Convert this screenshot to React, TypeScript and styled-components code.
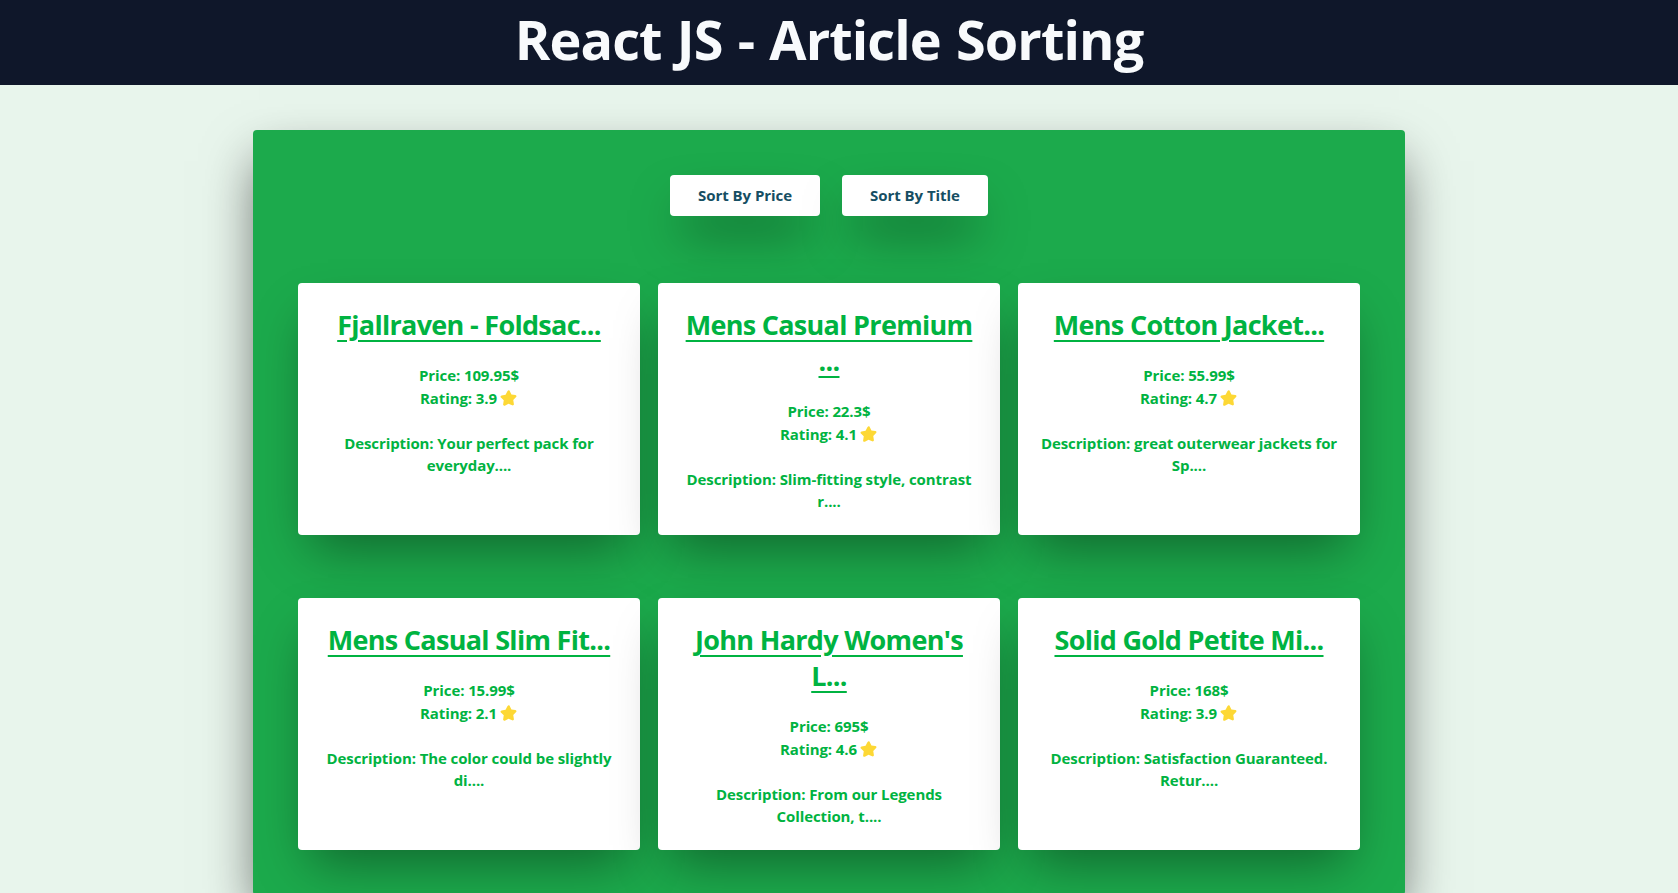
import React from "react";
import styled, { createGlobalStyle } from "styled-components";

type Article = {
  title: string;
  price: string;
  rating: string;
  description: string;
};

const articles: Article[] = [
  {
    title: "Fjallraven - Foldsac...",
    price: "109.95",
    rating: "3.9",
    description: "Your perfect pack for everyday....",
  },
  {
    title: "Mens Casual Premium ...",
    price: "22.3",
    rating: "4.1",
    description: "Slim-fitting style, contrast r....",
  },
  {
    title: "Mens Cotton Jacket...",
    price: "55.99",
    rating: "4.7",
    description: "great outerwear jackets for Sp....",
  },
  {
    title: "Mens Casual Slim Fit...",
    price: "15.99",
    rating: "2.1",
    description: "The color could be slightly di....",
  },
  {
    title: "John Hardy Women's L...",
    price: "695",
    rating: "4.6",
    description: "From our Legends Collection, t....",
  },
  {
    title: "Solid Gold Petite Mi...",
    price: "168",
    rating: "3.9",
    description: "Satisfaction Guaranteed. Retur....",
  },
];

const GlobalStyle = createGlobalStyle`
  html, body {
    margin: 0;
    padding: 0;
    height: 893px;
    overflow: hidden;
    background: #e8f5ec;
    font-family: "Open Sans", "Noto Sans", sans-serif;
  }
`;

const Page = styled.div`
  width: 1658px;
`;

const Header = styled.header`
  height: 85px;
  width: 1678px;
  background: #0f172a;
  color: #f8fafc;
  display: flex;
  justify-content: center;
  padding-right: 20px;
  box-sizing: border-box;
`;

const Heading = styled.h1`
  margin: 0;
  font-size: 54px;
  line-height: 78px;
  font-weight: 700;
  letter-spacing: -0.9px;
  word-spacing: 2px;
`;

const Panel = styled.main`
  width: 1152px;
  box-sizing: border-box;
  margin: 45px auto 0;
  padding: 45px;
  background: #1caa4c;
  border-radius: 4px;
  box-shadow: 0 25px 50px -6px rgba(0, 0, 0, 0.6);
`;

const Toolbar = styled.div`
  display: flex;
  justify-content: center;
  gap: 22px;
  margin-bottom: 67px;
`;

const SortButton = styled.button`
  height: 41px;
  padding: 0 28px 2px;
  border: 0;
  border-radius: 4px;
  background: #fff;
  color: #164e63;
  font-family: inherit;
  font-size: 15px;
  font-weight: 700;
  letter-spacing: -0.05px;
  box-shadow: 0 25px 50px -12px rgba(0, 0, 0, 0.6);
`;

const Grid = styled.div`
  display: grid;
  grid-template-columns: repeat(3, 342px);
  justify-content: space-between;
  row-gap: 63px;
`;

const Card = styled.article`
  height: 252px;
  box-sizing: border-box;
  padding: 24px 20px 0;
  background: #fff;
  border-radius: 4px;
  text-align: center;
  color: #00b341;
  font-size: 15px;
  line-height: 22.5px;
  font-weight: 700;
  letter-spacing: -0.1px;
  box-shadow: 0 25px 50px -12px rgba(0, 0, 0, 0.4);
`;

const Title = styled.h2`
  margin: 0 0 21px;
  font-size: 27px;
  line-height: 36px;
  font-weight: 700;
  letter-spacing: -0.7px;
  text-decoration: underline;
  text-underline-offset: 5px;
`;

const Line = styled.p`
  margin: 0;
`;

const Description = styled.p`
  margin: 23px 0 0;
  line-height: 22px;
`;

const Star = styled.svg`
  width: 19px;
  height: 19px;
  margin-left: 2px;
  vertical-align: -3px;
  fill: #fdd835;
`;

const App: React.FC = () => {
  return (
    <Page>
      <GlobalStyle />
      <Header>
        <Heading>React JS - Article Sorting</Heading>
      </Header>
      <Panel>
        <Toolbar>
          <SortButton>Sort By Price</SortButton>
          <SortButton>Sort By Title</SortButton>
        </Toolbar>
        <Grid>
          {articles.map((article) => (
            <Card key={article.title}>
              <Title>{article.title}</Title>
              <Line>Price: {article.price}$</Line>
              <Line>
                Rating: {article.rating}
                <Star viewBox="0 0 24 24">
                  <path d="M12 2.6c.6 0 1.1.3 1.4.9l2.3 4.6 5 .8c1.3.2 1.8 1.7.9 2.6l-3.6 3.6.8 5.1c.2 1.3-1.1 2.2-2.2 1.6L12 19.9l-4.6 2.4c-1.1.6-2.4-.3-2.2-1.6l.8-5.1-3.6-3.6c-.9-.9-.4-2.4.9-2.6l5-.8 2.3-4.6c.3-.6.8-.9 1.4-.9z" />
                </Star>
              </Line>
              <Description>Description: {article.description}</Description>
            </Card>
          ))}
        </Grid>
      </Panel>
    </Page>
  );
};

export default App;
